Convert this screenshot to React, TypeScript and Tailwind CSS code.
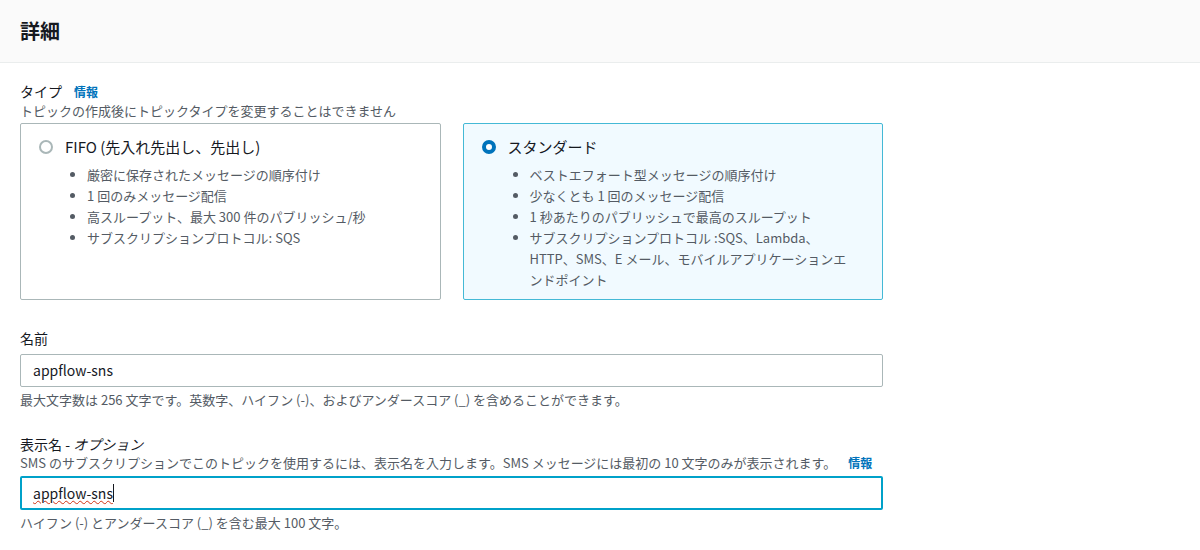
const F = { fontFamily: '"Noto Sans CJK JP", "Noto Sans", sans-serif' }

const Bullets = ({ items }: { items: string[] }) => (
  <ul className="mt-[5px] ml-[54px] mr-[24px] list-disc pl-[12px] text-[13px] leading-[21px] text-[#545b64] marker:text-[#545b64]">
    {items.map((t) => (
      <li key={t}>{t}</li>
    ))}
  </ul>
)

export default function App() {
  return (
    <div className="w-[1200px] h-[550px] bg-white text-[#16191f] overflow-hidden" style={F}>
      <div className="h-[63px] bg-[#fafafa] border-b border-[#eaeded] flex items-center px-[20px]">
        <h2 className="text-[20px] font-bold">詳細</h2>
      </div>
      <div className="ml-[20px] w-[863px]">
        <div className="mt-[18px] flex items-baseline gap-[12px] text-[14px] leading-[20px]">
          <span>タイプ</span>
          <span className="text-[12px] font-bold text-[#0073bb]">情報</span>
        </div>
        <p className="text-[13px] leading-[17px] text-[#545b64]">トピックの作成後にトピックタイプを変更することはできません</p>
        <div className="mt-[4px] grid grid-cols-2 gap-[22px]">
          <div className="h-[177px] border border-[#aab7b8] rounded-[2px] pt-[12px]">
            <div className="flex items-center pl-[18px] gap-[12px] text-[15px]">
              <span className="w-[14px] h-[14px] rounded-full border-2 border-[#aab7b8] bg-white" />
              <span>FIFO (先入れ先出し、先出し)</span>
            </div>
            <Bullets items={["厳密に保存されたメッセージの順序付け", "1 回のみメッセージ配信", "高スループット、最大 300 件のパブリッシュ/秒", "サブスクリプションプロトコル: SQS"]} />
          </div>
          <div className="h-[177px] border border-[#44b9d6] bg-[#f1faff] rounded-[2px] pt-[12px]">
            <div className="flex items-center pl-[18px] gap-[12px] text-[15px]">
              <span className="w-[14px] h-[14px] rounded-full border-[4px] border-[#0073bb] bg-white" />
              <span>スタンダード</span>
            </div>
            <Bullets items={["ベストエフォート型メッセージの順序付け", "少なくとも 1 回のメッセージ配信", "1 秒あたりのパブリッシュで最高のスループット", "サブスクリプションプロトコル :SQS、Lambda、HTTP、SMS、E メール、モバイルアプリケーションエンドポイント"]} />
          </div>
        </div>
        <div className="mt-[28px] text-[14px] leading-[20px]">名前</div>
        <div className="mt-[6px] h-[33px] border border-[#aab7b8] rounded-[2px] flex items-center px-[12px] text-[14px]">appflow-sns</div>
        <p className="mt-[4px] text-[13px] leading-[17px] text-[#545b64]">最大文字数は 256 文字です。英数字、ハイフン (-)、およびアンダースコア (_) を含めることができます。</p>
        <div className="mt-[26px] text-[14px] leading-[20px]">表示名 - <i>オプション</i></div>
        <p className="text-[13px] leading-[17px] text-[#545b64] whitespace-nowrap">
          SMS のサブスクリプションでこのトピックを使用するには、表示名を入力します。SMS メッセージには最初の 10 文字のみが表示されます。
          <span className="ml-[12px] text-[12px] font-bold text-[#0073bb]">情報</span>
        </p>
        <div className="mt-[5px] h-[34px] border-2 border-[#00a1c9] rounded-[2px] flex items-center px-[11px] text-[14px]">
          <span className="underline decoration-wavy decoration-[#d13212] decoration-1">appflow-sns</span>
          <span className="w-px h-[18px] bg-[#16191f]" />
        </div>
        <p className="mt-[4px] text-[13px] leading-[17px] text-[#545b64]">ハイフン (-) とアンダースコア (_) を含む最大 100 文字。</p>
      </div>
    </div>
  )
}
